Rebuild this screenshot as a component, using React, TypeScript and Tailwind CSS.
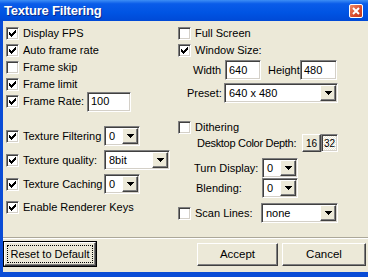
import React from 'react';

const sunken =
  'border border-t-[#808080] border-l-[#808080] border-b-white border-r-white shadow-[inset_1px_1px_0_#404040,inset_-1px_-1px_0_#d4d0c8]';
const raised =
  'border border-t-white border-l-white border-b-[#404040] border-r-[#404040] shadow-[inset_-1px_-1px_0_#808080]';

const CHECK_Y = [2, 3, 4, 3, 2, 1, 0];

const Check: React.FC<{ on?: boolean }> = ({ on }) => (
  <span className={`${sunken} bg-white w-[13px] h-[13px] shrink-0 flex items-center justify-center`}>
    {on && (
      <svg width="7" height="7" viewBox="0 0 7 7" shapeRendering="crispEdges">
        {CHECK_Y.map((y, x) => (
          <rect key={x} x={x} y={y} width="1" height="3" fill="#000" />
        ))}
      </svg>
    )}
  </span>
);

const Arrow = () => (
  <svg width="7" height="4" viewBox="0 0 7 4" shapeRendering="crispEdges">
    <polygon points="0,0 7,0 3.5,4" fill="#000" />
  </svg>
);

const Combo: React.FC<{ value: string; className: string }> = ({ value, className }) => (
  <div className={`${sunken} ${className} bg-white p-px h-[20px] flex items-stretch shrink-0`}>
    <span className="flex-1 flex items-center pl-[3px] leading-none">{value}</span>
    <span className={`${raised} bg-[#ece9d8] w-[16px] flex items-center justify-center`}>
      <Arrow />
    </span>
  </div>
);

const Field: React.FC<{ value: string; className: string }> = ({ value, className }) => (
  <div className={`${sunken} ${className} bg-white h-[20px] flex items-center pl-[3px] shrink-0`}>
    {value}
  </div>
);

const CheckRow: React.FC<{ label: string; on?: boolean; className?: string }> = ({
  label,
  on,
  className = 'h-[17px]',
}) => (
  <div className={`flex items-center ${className}`}>
    <Check on={on} />
    <span className="ml-[4px] whitespace-nowrap">{label}</span>
  </div>
);

const App: React.FC = () => {
  return (
    <div className="w-[368px] h-[277px] flex flex-col bg-[#0a4cd6] font-['Liberation_Sans',Arial,sans-serif] text-[11px] text-black overflow-hidden">
      {/* Title bar */}
      <div className="h-[21px] shrink-0 flex items-center justify-between pl-[4px] pr-[5px] bg-[linear-gradient(to_bottom,#3d8ef5_0%,#0a5ce9_18%,#0054e3_60%,#0049d6_100%)]">
        <span className="text-white font-bold text-[13px] tracking-[-0.2px] [text-shadow:1px_1px_0_#0a2a8a]">
          Texture Filtering
        </span>
        <span className="w-[14px] h-[14px] rounded-[2px] border border-white bg-[linear-gradient(135deg,#f08a66,#d8492a_60%,#c23a1c)] flex items-center justify-center">
          <svg width="8" height="8" viewBox="0 0 8 8">
            <path d="M1 1 L7 7 M7 1 L1 7" stroke="#fff" strokeWidth="2" />
          </svg>
        </span>
      </div>

      <div className="flex-1 flex pl-[3px] pb-[5px]">
        <div className="flex-1 bg-[#ece9d8] flex flex-col">
          <div className="h-[216px] flex">
            {/* Left column */}
            <div className="w-[172px] pl-[3px] pt-[4px] flex flex-col">
              <CheckRow label="Display FPS" on />
              <CheckRow label="Auto frame rate" on />
              <CheckRow label="Frame skip" />
              <CheckRow label="Frame limit" on />
              <div className="h-[17px] flex items-center">
                <Check on />
                <span className="ml-[4px] w-[64px]">Frame Rate:</span>
                <Field value="100" className="w-[44px]" />
              </div>

              <div className="mt-[14px] h-[24px] flex items-center">
                <Check on />
                <span className="ml-[4px] w-[81px] whitespace-nowrap">Texture Filtering</span>
                <Combo value="0" className="w-[36px]" />
              </div>
              <div className="h-[24px] flex items-center">
                <Check on />
                <span className="ml-[4px] w-[81px] whitespace-nowrap">Texture quality:</span>
                <Combo value="8bit" className="w-[66px]" />
              </div>
              <div className="h-[24px] flex items-center">
                <Check on />
                <span className="ml-[4px] w-[81px] whitespace-nowrap">Texture Caching</span>
                <Combo value="0" className="w-[36px]" />
              </div>
              <CheckRow label="Enable Renderer Keys" on className="h-[22px]" />
            </div>

            {/* Right column */}
            <div className="flex-1 pl-[3px] pt-[4px] flex flex-col">
              <CheckRow label="Full Screen" />
              <CheckRow label="Window Size:" on />
              <div className="h-[22px] flex items-center pl-[15px]">
                <span className="w-[32px]">Width</span>
                <Field value="640" className="w-[36px]" />
                <span className="ml-[7px] w-[32px]">Height</span>
                <Field value="480" className="w-[37px]" />
              </div>
              <div className="h-[24px] flex items-center pl-[9px]">
                <span className="w-[37px]">Preset:</span>
                <Combo value="640 x 480" className="w-[114px]" />
              </div>

              <CheckRow label="Dithering" className="mt-[15px] h-[14px]" />
              <div className="h-[18px] flex items-center pl-[19px]">
                <span className="w-[105px] whitespace-nowrap tracking-[-0.3px]">Desktop Color Depth:</span>
                <span className={`${raised} bg-[#ece9d8] w-[19px] h-[18px] flex items-center justify-center text-[10px]`}>
                  16
                </span>
                <span
                  className={`${sunken} w-[17px] h-[18px] flex items-center justify-center text-[10px] bg-[repeating-conic-gradient(#ffffff_0_25%,#ece9d8_0_50%)] bg-[length:2px_2px]`}
                >
                  32
                </span>
              </div>
              <div className="mt-[6px] h-[20px] flex items-center pl-[16px]">
                <span className="w-[68px]">Turn Display:</span>
                <Combo value="0" className="w-[36px]" />
              </div>
              <div className="h-[20px] flex items-center pl-[18px]">
                <span className="w-[66px]">Blending:</span>
                <Combo value="0" className="w-[36px]" />
              </div>
              <div className="mt-[5px] h-[20px] flex items-center">
                <Check />
                <span className="ml-[4px] w-[66px]">Scan Lines:</span>
                <Combo value="none" className="w-[77px]" />
              </div>
            </div>
          </div>

          {/* Separator */}
          <div className="h-px bg-[#aca899]" />
          <div className="h-px bg-white" />

          {/* Buttons */}
          <div className="flex items-start pt-[2px]">
            <div className="w-[94px] h-[26px] border border-black bg-[#ece9d8] flex">
              <div className={`${raised} flex-1 flex p-[2px]`}>
                <div className="flex-1 border border-dotted border-black flex items-center justify-center whitespace-nowrap text-[11px]">
                  Reset to Default
                </div>
              </div>
            </div>
            <div
              className={`${raised} ml-[100px] mt-[2px] w-[81px] h-[23px] bg-[#ece9d8] flex items-center justify-center text-[11.5px]`}
            >
              Accept
            </div>
            <div
              className={`${raised} ml-[4px] mt-[2px] w-[84px] h-[23px] bg-[#ece9d8] flex items-center justify-center text-[11.5px]`}
            >
              Cancel
            </div>
          </div>
        </div>
      </div>
    </div>
  );
};

export default App;
